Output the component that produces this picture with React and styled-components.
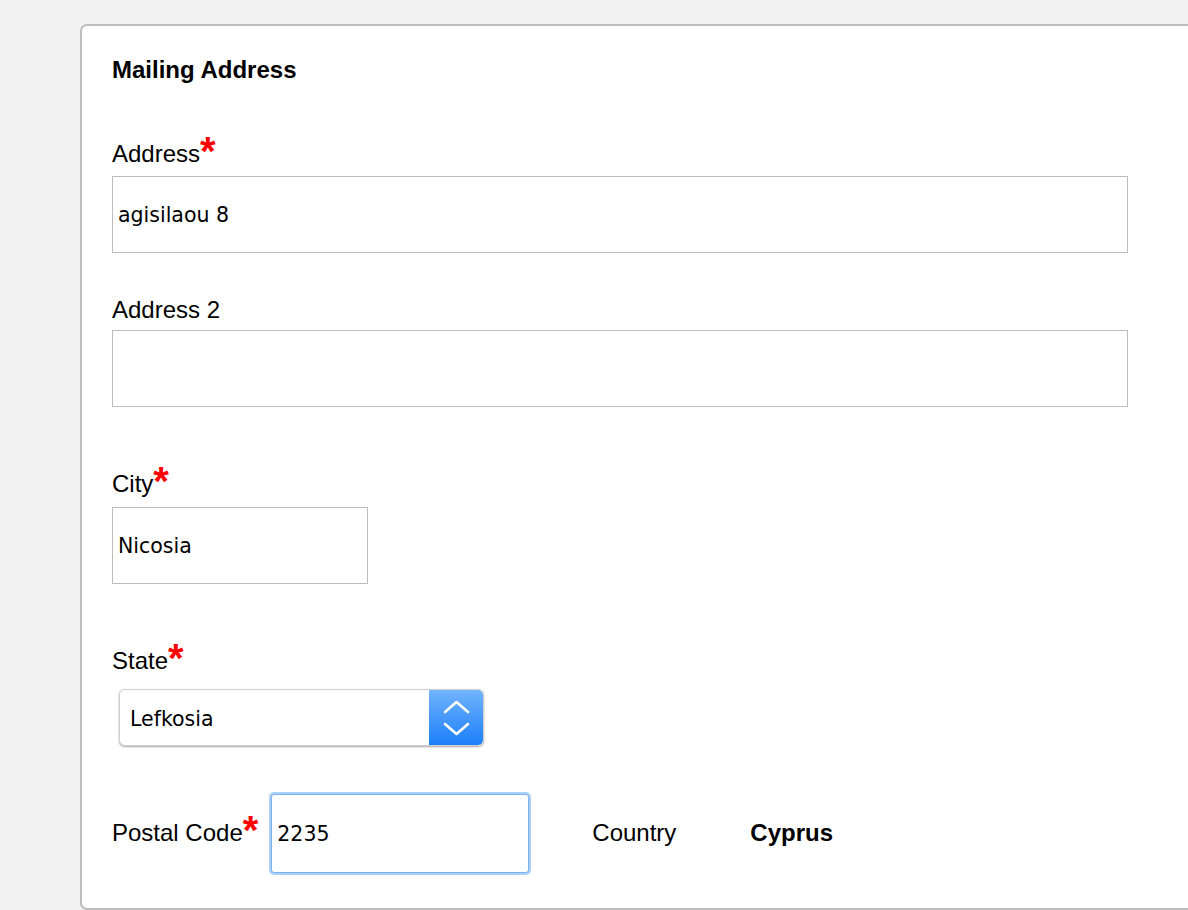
import React from 'react';
import styled, { createGlobalStyle } from 'styled-components';

const GlobalStyle = createGlobalStyle`
    html, body {
        margin: 0;
        padding: 0;
        background: #f2f2f2;
        overflow: hidden;
    }

    body {
        font-family: 'Liberation Sans', Arial, Helvetica, sans-serif;
        color: #000;
    }
`

const Page = styled.div`
    padding: 24px 0px 0px 80px;
`

const Card = styled.div`
    width: 1130px;
    padding: 30px 0px 35px 30px;
    background: #fff;
    border: 2px solid #bdbdbd;
    border-radius: 7px;
    box-sizing: border-box;
`

const Title = styled.h2`
    margin: 0;
    font-size: 24px;
    line-height: 28px;
    font-weight: 700;
`

const Field = styled.div`
    margin-top: ${props => props.$top}px;
    display: flex;
    flex-direction: column;
    align-items: flex-start;
`

const Label = styled.label`
    margin-bottom: ${props => props.$gap || 0}px;
    font-size: 24px;
    line-height: 28px;
    white-space: nowrap;
`

const Star = styled.span`
    color: #ff0000;
    font-size: 40px;
    font-weight: 700;
    line-height: 0;
    vertical-align: -3px;
`

const TextInput = styled.input`
    width: ${props => props.$width}px;
    height: ${props => props.$height || 77}px;
    margin-left: ${props => props.$left || 0}px;
    padding: 0px 5px;
    box-sizing: border-box;
    background: #fff;
    border: 1px solid ${props => props.$focus ? '#7fb0ea' : '#bdbdbd'};
    border-radius: ${props => props.$focus ? '3px' : '0px'};
    box-shadow: ${props => props.$focus ? '0 0 0 2px #a9d0f8' : 'none'};
    outline: none;
    font-family: 'DejaVu Sans', 'Liberation Sans', sans-serif;
    font-size: 20.5px;
    color: #000;
`

const SelectBox = styled.div`
    width: 365px;
    height: 57px;
    margin-left: 7px;
    display: flex;
    box-sizing: border-box;
    background: #fff;
    border: 1px solid #d0d0d0;
    border-radius: 6px;
    box-shadow: 0 1px 2px rgba(0, 0, 0, 0.35);
    overflow: hidden;

    select {
        flex: 1;
        padding: 3px 10px 0px;
        appearance: none;
        -webkit-appearance: none;
        background: transparent;
        border: none;
        outline: none;
        font-family: 'DejaVu Sans', 'Liberation Sans', sans-serif;
        font-size: 20.5px;
        color: #000;
    }
`

const Stepper = styled.div`
    width: 54px;
    display: flex;
    align-items: center;
    justify-content: center;
    background: linear-gradient(to bottom, #72b4fd, #1b7ffb);
`

const Row = styled.div`
    margin-top: 48px;
    display: flex;
    align-items: baseline;
`

const Country = styled.span`
    margin-left: 63px;
    width: 158px;
    font-size: 24px;
`

const CountryValue = styled.span`
    font-size: 24px;
    font-weight: 700;
`

const Chevrons = () => (
    <svg width="54" height="57" viewBox="0 0 54 57">
        <polyline points="16,23 27.5,13 39,23" fill="none" stroke="#fff" strokeWidth="2.6" strokeLinecap="round" strokeLinejoin="round" />
        <polyline points="16,35 27.5,45 39,35" fill="none" stroke="#fff" strokeWidth="2.6" strokeLinecap="round" strokeLinejoin="round" />
    </svg>
)

const App = () => {
    return (
        <Page>
            <GlobalStyle />
            <Card>
                <Title>Mailing Address</Title>
                <Field $top={56}>
                    <Label $gap={8}>Address<Star>*</Star></Label>
                    <TextInput $width={1016} defaultValue='agisilaou 8' />
                </Field>
                <Field $top={43}>
                    <Label $gap={6}>Address 2</Label>
                    <TextInput $width={1016} defaultValue='' />
                </Field>
                <Field $top={63}>
                    <Label $gap={9}>City<Star>*</Star></Label>
                    <TextInput $width={256} defaultValue='Nicosia' />
                </Field>
                <Field $top={63}>
                    <Label $gap={14}>State<Star>*</Star></Label>
                    <SelectBox>
                        <select defaultValue='Lefkosia'>
                            <option>Lefkosia</option>
                            <option>Lemesos</option>
                            <option>Larnaka</option>
                            <option>Pafos</option>
                            <option>Ammochostos</option>
                        </select>
                        <Stepper><Chevrons /></Stepper>
                    </SelectBox>
                </Field>
                <Row>
                    <Label>Postal Code<Star>*</Star></Label>
                    <TextInput $width={258} $height={79} $left={13} $focus defaultValue='2235' />
                    <Country>Country</Country>
                    <CountryValue>Cyprus</CountryValue>
                </Row>
            </Card>
        </Page>
    )
};

export default App;
